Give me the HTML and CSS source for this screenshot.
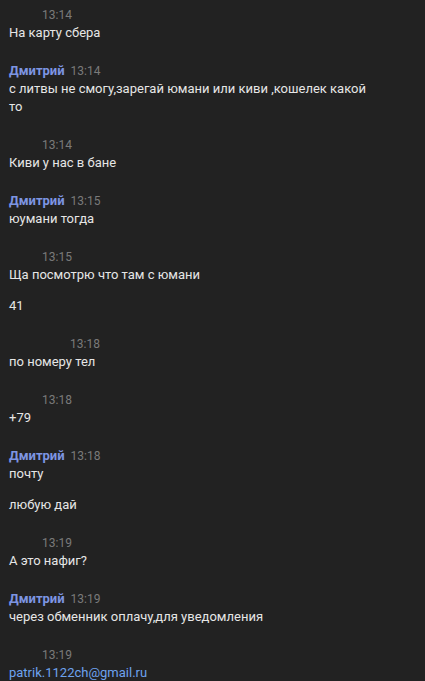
FILE: index.html
```html
<!DOCTYPE html>
<html lang="ru">
<head>
<meta charset="utf-8">
<link rel="stylesheet" href="styles.css">
</head>
<body>
<div class="chat">
  <div class="group">
    <div class="header"><span class="author blank"></span><span class="time">13:14</span></div>
    <p class="msg">На карту сбера</p>
  </div>
  <div class="group">
    <div class="header"><span class="author">Дмитрий</span><span class="time">13:14</span></div>
    <p class="msg">с литвы не смогу,зарегай юмани или киви ,кошелек какой то</p>
  </div>
  <div class="group">
    <div class="header"><span class="author blank"></span><span class="time">13:14</span></div>
    <p class="msg">Киви у нас в бане</p>
  </div>
  <div class="group">
    <div class="header"><span class="author">Дмитрий</span><span class="time">13:15</span></div>
    <p class="msg">юумани тогда</p>
  </div>
  <div class="group">
    <div class="header"><span class="author blank"></span><span class="time">13:15</span></div>
    <p class="msg">Ща посмотрю что там с юмани</p>
    <p class="msg">41</p>
  </div>
  <div class="group">
    <div class="header"><span class="author blank wide"></span><span class="time">13:18</span></div>
    <p class="msg">по номеру тел</p>
  </div>
  <div class="group">
    <div class="header"><span class="author blank"></span><span class="time">13:18</span></div>
    <p class="msg">+79</p>
  </div>
  <div class="group">
    <div class="header"><span class="author">Дмитрий</span><span class="time">13:18</span></div>
    <p class="msg">почту</p>
    <p class="msg">любую дай</p>
  </div>
  <div class="group">
    <div class="header"><span class="author blank"></span><span class="time">13:19</span></div>
    <p class="msg">А это нафиг?</p>
  </div>
  <div class="group">
    <div class="header"><span class="author">Дмитрий</span><span class="time">13:19</span></div>
    <p class="msg">через обменник оплачу,для уведомления</p>
  </div>
  <div class="group">
    <div class="header"><span class="author blank"></span><span class="time">13:19</span></div>
    <p class="msg"><a class="link" href="#">patrik.1122ch@gmail.ru</a></p>
  </div>
</div>
</body>
</html>
```

FILE: styles.css
```css
html, body {
  margin: 0;
  padding: 0;
  background: #222222;
}
body {
  font-family: Roboto, "Noto Sans", sans-serif;
  font-size: 13px;
  line-height: 18px;
  color: #e6e6e6;
}
.chat {
  padding: 6px 9px;
  width: 366px;
}
.group {
  margin-bottom: 20px;
}
.header {
  display: flex;
  align-items: baseline;
  gap: 6px;
  height: 18px;
}
.author {
  font-weight: 700;
  color: #7d95e2;
}
.author.blank {
  display: inline-block;
  width: 27px;
}
.author.blank.wide {
  width: 55px;
}
.time {
  font-size: 12px;
  color: #7a7a7a;
}
.msg {
  margin: 0;
}
.msg + .msg {
  margin-top: 13px;
}
.link {
  color: #6ea3ee;
  text-decoration: none;
}
```
